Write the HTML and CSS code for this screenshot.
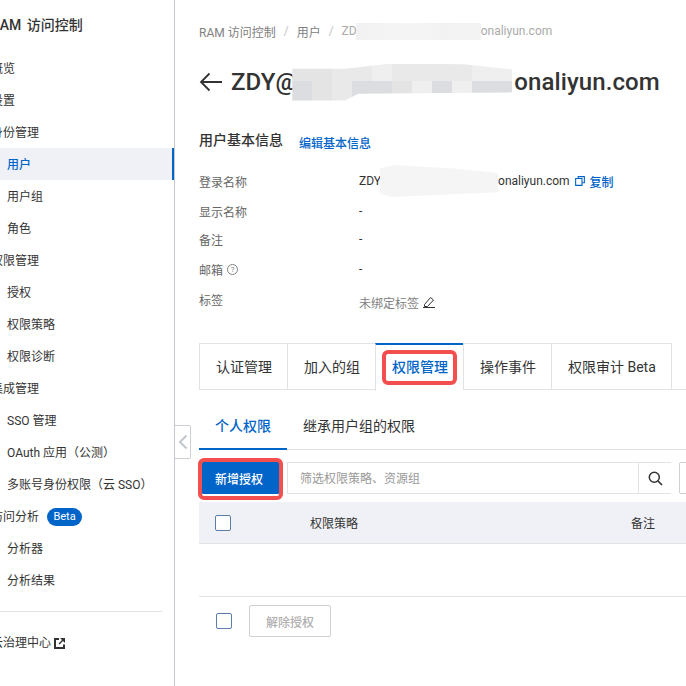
FILE: index.html
```html
<!DOCTYPE html>
<html lang="zh-CN">
<head>
<meta charset="utf-8">
<title>RAM 访问控制</title>
<link rel="stylesheet" href="styles.css">
</head>
<body>
<div class="app">
  <aside class="sidebar">
    <div class="brand">RAM 访问控制</div>
    <nav class="nav">
      <a class="item">概览</a>
      <a class="item">设置</a>
      <a class="item">身份管理</a>
      <a class="item sub active">用户</a>
      <a class="item sub">用户组</a>
      <a class="item sub">角色</a>
      <a class="item">权限管理</a>
      <a class="item sub">授权</a>
      <a class="item sub">权限策略</a>
      <a class="item sub">权限诊断</a>
      <a class="item">集成管理</a>
      <a class="item sub">SSO 管理</a>
      <a class="item sub">OAuth 应用（公测）</a>
      <a class="item sub">多账号身份权限（云 SSO）</a>
      <a class="item">访问分析<span class="beta">Beta</span></a>
      <a class="item sub">分析器</a>
      <a class="item sub">分析结果</a>
    </nav>
    <div class="side-foot">
      <a class="item">云治理中心
        <svg class="ext" width="13" height="13" viewBox="0 0 13 13"><path d="M6 2H2v9h9V7.500" fill="none" stroke="#333" stroke-width="2"/><path d="M7 1h5v5L10 4 6.500 7.500 5.500 6.500 9 3z" fill="#333"/></svg>
      </a>
    </div>
  </aside>

  <button class="collapse" aria-label="收起">
    <svg width="10" height="16" viewBox="0 0 10 16"><path d="M8.500 1.500 2 8l6.500 6.500" fill="none" stroke="#c2c7ce" stroke-width="2"/></svg>
  </button>

  <main class="main">
    <div class="crumbs">
      <span>RAM 访问控制</span><i>/</i><span>用户</span><i>/</i>
      <span class="crumb-now">ZD<span class="blur-crumb"></span>onaliyun.com</span>
    </div>

    <h1 class="title">
      <svg class="back" width="24" height="20" viewBox="0 0 24 20"><path d="M23 10H2M10.500 1.500 2 10l8.500 8.500" fill="none" stroke="#333" stroke-width="1.800"/></svg>
      <span>ZDY@</span>
      <span class="mosaic">
        <b class="m2"></b><b class="m2"></b><b class="m3"></b><b class="m3"></b><b class="m4"></b><b class="m3"></b><b class="m3"></b><b class="m3"></b><b class="m3"></b><b class="m4"></b><b class="m4"></b>
        <b class="m1"></b><b class="m2"></b><b class="m3"></b><b class="m1"></b><b class="m1"></b><b class="m2"></b><b class="m4"></b><b class="m1"></b><b class="m4"></b><b class="m1"></b><b class="m1"></b>
      </span>
      <span>onaliyun.com</span>
    </h1>

    <div class="sec-head">
      <h2>用户基本信息</h2>
      <a class="link">编辑基本信息</a>
    </div>

    <dl class="info">
      <div class="row r1"><dt>登录名称</dt>
        <dd>ZDY<span class="blur-row"></span>onaliyun.com
          <svg class="copy" width="10" height="10" viewBox="0 0 11 11"><path d="M3.500 2.500V.7h6.800v6.800H8M.7 2.800h7v7.500h-7z" fill="none" stroke="#0064c8" stroke-width="1.200"/></svg>
          <a class="link">复制</a>
        </dd></div>
      <div class="row r2"><dt>显示名称</dt><dd>-</dd></div>
      <div class="row r3"><dt>备注</dt><dd>-</dd></div>
      <div class="row r4"><dt>邮箱<span class="help">?</span></dt><dd>-</dd></div>
      <div class="row r5"><dt>标签</dt>
        <dd class="muted">未绑定标签
          <svg class="pen" width="12" height="12" viewBox="0 0 12 12"><path d="M1.500 8.500 7.500 1.500l3 2.500-6 6.500H1.500z" fill="none" stroke="#333" stroke-width="1"/><path d="M0 11.500h12" stroke="#333" stroke-width="1"/></svg>
        </dd></div>
    </dl>

    <div class="tabs">
      <a class="tab">认证管理</a>
      <a class="tab">加入的组</a>
      <a class="tab on">权限管理<span class="mark"></span></a>
      <a class="tab">操作事件</a>
      <a class="tab">权限审计 Beta</a>
    </div>

    <div class="subtabs">
      <a class="subtab on">个人权限</a>
      <a class="subtab">继承用户组的权限</a>
    </div>

    <div class="toolbar">
      <button class="primary">新增授权<span class="mark mark-btn"></span></button>
      <div class="search">
        <span class="placeholder">筛选权限策略、资源组</span>
        <span class="search-btn">
          <svg width="15" height="15" viewBox="0 0 15 15"><circle cx="6.300" cy="6.300" r="5" fill="none" stroke="#333" stroke-width="1.500"/><path d="m10 10 4 4" stroke="#333" stroke-width="1.700"/></svg>
        </span>
      </div>
      <span class="stub"></span>
    </div>

    <div class="thead">
      <span class="check"></span>
      <span class="th1">权限策略</span>
      <span class="th2">备注</span>
    </div>

    <div class="tfoot">
      <span class="check"></span>
      <button class="ghost">解除授权</button>
    </div>
  </main>
</div>
</body>
</html>
```
FILE: styles.css
```css
* { box-sizing: border-box; }
html, body { margin: 0; height: 100%; }
body {
  width: 686px; height: 686px; overflow: hidden; background: #fff; color: #333;
  font-family: Roboto, "Noto Sans CJK SC", sans-serif; font-size: 12px;
}
a { color: inherit; text-decoration: none; }
button { font: inherit; }
.app { position: relative; display: flex; height: 686px; }

.sidebar {
  flex: 0 0 175px; height: 100%; border-right: 1px solid #c4c9d0;
  overflow: hidden; padding-top: 15px;
}
.brand { margin-left: -9px; height: 20px; line-height: 20px; font-size: 14px; font-weight: 500; word-spacing: 2px; white-space: nowrap; }
.nav { margin-top: 17px; display: flex; flex-direction: column; }
.item { display: flex; align-items: center; height: 32px; padding-top: 2px; margin-left: -9px; white-space: nowrap; line-height: 18px; }
.item.sub { margin-left: 0; padding-left: 7px; }
.item.active { background: #eff1f6; color: #0064c8; font-weight: 500; border-right: 2px solid #0064c8; }
.beta {
  margin-left: 8px; width: 35px; height: 18px; border-radius: 9px; background: #0064c8; color: #fff;
  font-size: 11px; line-height: 18px; text-align: center;
}
.side-foot { margin: 15px 12px 0 0; border-top: 1px solid #e3e3e3; padding-top: 14px; }
.ext { margin-left: 2px; }

.collapse {
  position: absolute; left: 175px; top: 425px; width: 16px; height: 34px; padding: 0;
  border: 1px solid #ccd0d6; border-left: 0; border-radius: 0 2px 2px 0; background: #fff;
  display: flex; align-items: center; justify-content: center;
}

.main { flex: 1; min-width: 0; padding: 22px 0 0 24px; overflow: hidden; }
.crumbs { display: flex; align-items: center; height: 18px; color: #808080; white-space: nowrap; }
.crumbs i { font-style: normal; color: #c4c4c4; margin: 0 8px; }
.crumb-now { display: inline-flex; align-items: center; color: #aaa; position: relative; }
.blur-crumb { width: 125px; height: 17px; margin-left: -1px; background: linear-gradient(90deg, #f1f1f1, #f5f5f5 40%, #f2f2f2 70%, #f3f3f3); }

.title {
  display: flex; align-items: center; height: 38px; margin: 23px 0 0; white-space: nowrap;
  font-size: 24px; font-weight: 500; color: #333; letter-spacing: .1px;
}
.back { margin-right: 8px; flex: none; }
.mosaic {
  flex: none; display: grid; grid-template-columns: repeat(11, 20px); grid-template-rows: 17px 20px;
  margin: 0 2px 0 -5px; position: relative; clip-path: polygon(0 14%, 24% 14%, 45% 0, 78% 2%, 100% 16%, 100% 78%, 30% 82%, 24% 100%, 0 100%);
}
.m1 { background: #dcdde0; }
.m2 { background: #e4e4e4; }
.m3 { background: #e9e9e9; }
.m4 { background: #efefef; }

.sec-head { display: flex; align-items: baseline; margin-top: 29px; height: 20px; }
.sec-head h2 { margin: 0; font-size: 14px; font-weight: 500; line-height: 20px; }
.sec-head .link { margin-left: 16px; position: relative; top: 3px; }
.link { color: #0064c8; font-weight: 500; font-size: 12px; }

.info { margin: 21px 0 0; }
.row { display: flex; align-items: center; white-space: nowrap; }
.row dt { flex: 0 0 160px; display: flex; align-items: center; color: #666; }
.row dd { margin: 0; display: flex; align-items: center; color: #333; }
.r1 { height: 20px; }
.r2 { height: 20px; margin-top: 10px; }
.r3 { height: 20px; margin-top: 8px; }
.r4 { height: 20px; margin-top: 10px; }
.r5 { height: 22px; margin-top: 11px; }
.r5 dt { position: relative; top: -2px; }
.r5 dd { position: relative; top: 1px; }
.blur-row {
  width: 118px; height: 32px; margin-left: -1px; background: #f5f5f5;
  clip-path: polygon(0 10%, 12% 0, 60% 10%, 100% 25%, 100% 85%, 10% 100%, 0 90%);
}
.copy { margin: 0 5px 0 5px; }
.muted { color: #808080 !important; }
.pen { margin-left: 4px; }
.help {
  width: 11px; height: 11px; margin-left: 4px; border: 1px solid #808080; border-radius: 50%;
  font-size: 8px; line-height: 9px; text-align: center; color: #808080;
}

.tabs { display: flex; height: 47px; margin-top: 31px; border-bottom: 1px solid #e3e3e3; }
.tab {
  position: relative; display: flex; align-items: center; justify-content: center;
  height: 47px; padding: 0 15px 2px 16px; font-size: 14px; white-space: nowrap;
  border: 1px solid #e3e3e3; border-right: 0;
}
.tab:nth-child(5) { border-right: 1px solid #e3e3e3; }
.tab.on { color: #0064c8; font-weight: 500; border-top: 2px solid #0064c8; border-bottom: 0; background: #fff; height: 48px; padding-bottom: 4px; }
.mark { position: absolute; left: 6px; top: 5px; width: 75px; height: 35px; border: 4px solid #f44f4f; border-radius: 6px; }

.subtabs { display: flex; height: 47px; margin-top: 13px; border-bottom: 1px solid #e3e3e3; }
.subtab {
  display: flex; align-items: center; justify-content: center; height: 47px; padding: 0 16px 4px;
  font-size: 14px; white-space: nowrap;
}
.subtab.on { color: #0064c8; font-weight: 500; border-bottom: 2px solid #0064c8; padding-bottom: 2px; }

.toolbar { display: flex; margin-top: 12px; height: 32px; padding-left: 3px; }
.primary {
  position: relative; flex: none; width: 77px; height: 32px; padding: 0 3px 0 0; border: 0; border-radius: 1px;
  background: #0064c8; color: #fff; font-size: 12px; font-weight: 500;
}
.mark-btn { left: -4px; top: -4px; width: 85px; height: 42px; border-width: 4px; border-radius: 6px; }
.search { flex: none; display: flex; width: 384px; height: 32px; margin-left: 8px; border: 1px solid #e3e3e3; border-right: 0; }
.placeholder { flex: 1; padding-left: 12px; line-height: 32px; color: #999; }
.search-btn { flex: none; width: 33px; display: flex; align-items: center; justify-content: center; border-left: 1px solid #e3e3e3; }
.stub { flex: none; width: 40px; height: 32px; margin-left: 8px; border: 1px solid #d0d0d0; border-radius: 2px; }

.thead { position: relative; display: flex; align-items: center; height: 42px; margin-top: 8px; background: #eff1f6; border-bottom: 1px solid #e3e3e3; padding-left: 16px; }
.check { flex: none; width: 16px; height: 16px; background: #fff; border: 1px solid #5a7ea6; border-radius: 2px; }
.th1 { margin-left: 79px; }
.th2 { margin-left: 273px; }

.tfoot { display: flex; align-items: center; margin-top: 52px; border-top: 1px solid #e3e3e3; padding: 8px 0 0 17px; }
.ghost { flex: none; width: 82px; height: 32px; margin-left: 17px; padding: 0; background: #fff; border: 1px solid #d0d0d0; border-radius: 2px; color: #b0b0b0; font-size: 12px; font-weight: 500; }
```
